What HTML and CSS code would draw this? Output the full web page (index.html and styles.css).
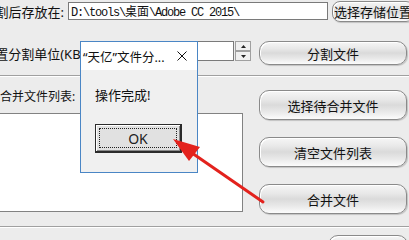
FILE: index.html
```html
<!DOCTYPE html>
<html lang="zh-CN">
<head>
  <meta charset="UTF-8">
  <link rel="stylesheet" href="styles.css">
</head>
<body>
  <div class="app">
    <div class="row row-path">
      <div class="label label-path"><span>分割后存放在:</span></div>
      <div class="field field-path">D:\tools\<span class="cjk">桌面</span>\Adobe CC 2015\</div>
      <button class="gloss btn-browse">选择存储位置</button>
    </div>

    <div class="row row-size">
      <div class="label label-size"><span>设置分割单位(KB):</span></div>
      <div class="field field-size"></div>
      <div class="spin">
        <span class="spin-btn">
          <svg width="5" height="3" viewBox="0 0 5 3"><path d="M0 3 L2.5 0 L5 3 Z" fill="#222"/></svg>
        </span>
        <span class="spin-btn">
          <svg width="5" height="3" viewBox="0 0 5 3"><path d="M0 0 L2.5 3 L5 0 Z" fill="#222"/></svg>
        </span>
      </div>
      <button class="gloss btn-side">分割文件</button>
    </div>

    <div class="sep"></div>

    <div class="merge">
      <div class="merge-left">
        <div class="label-list">合并文件列表:</div>
        <div class="listbox"></div>
      </div>
      <div class="merge-right">
        <button class="gloss btn-side">选择待合并文件</button>
        <button class="gloss btn-side">清空文件列表</button>
        <button class="gloss btn-side">合并文件</button>
      </div>
    </div>

    <div class="sep sep-bottom"></div>

    <div class="row row-bottom">
      <button class="gloss btn-bottom"></button>
    </div>
  </div>

  <!-- 提示框 -->
  <div class="msgbox">
    <div class="msgbox-title">
      <span>“天亿”文件分...</span>
      <svg class="msgbox-close" width="10" height="10" viewBox="0 0 10 10">
        <path d="M0.5 0.5 L9.5 9.5 M9.5 0.5 L0.5 9.5" stroke="#111" stroke-width="1"/>
      </svg>
    </div>
    <div class="msgbox-body">
      <p>操作完成!</p>
      <button class="ok"><span>OK</span></button>
    </div>
  </div>

  <svg class="arrow" width="409" height="240" viewBox="0 0 409 240">
    <line x1="263" y1="202" x2="192" y2="153" stroke="#e3221d" stroke-width="3" stroke-linecap="round"/>
    <polygon points="173,139 189,161 200,147" fill="#e3221d"/>
  </svg>
</body>
</html>
```

FILE: styles.css
```css
* {
  box-sizing: border-box;
}

body {
  margin: 0;
  padding: 0;
  width: 409px;
  height: 240px;
  overflow: hidden;
  position: relative;
  background-color: #ececec;
  font-family: "Noto Sans", "Noto Sans CJK SC", sans-serif;
  font-size: 13px;
  color: #111;
}

.app {
  display: flex;
  flex-direction: column;
}

.row {
  display: flex;
  align-items: center;
  flex: none;
}

.label {
  display: flex;
  justify-content: flex-end;
  overflow: hidden;
  white-space: nowrap;
  flex: none;
}

.field {
  background: #fff;
  border: 1px solid #7a7a7a;
  flex: none;
}

/* первая строка */
.row-path {
  height: 22px;
}

.label-path {
  width: 67px;
  padding-right: 3px;
}

.field-path {
  width: 260px;
  height: 18px;
  margin-left: 1px;
  padding-left: 2px;
  font-family: "Liberation Mono", monospace;
  font-size: 12px;
  letter-spacing: -1.2px;
  line-height: 16px;
  white-space: nowrap;
  overflow: hidden;
}

.field-path .cjk {
  font-family: "Noto Sans CJK SC", sans-serif;
  letter-spacing: 0;
}

.gloss {
  flex: none;
  padding: 0;
  font-family: "Noto Sans", "Noto Sans CJK SC", sans-serif;
  font-size: 13px;
  color: #111;
  border: 1px solid #8a8a8a;
  border-radius: 10px;
  background: linear-gradient(to bottom, #f6f6f6 0%, #e8e8e8 30%, #dadada 50%, #e9e9e9 75%, #fcfcfc 100%);
  box-shadow: inset 1px 1px 0 #fff, 1px 1px 1px rgba(0, 0, 0, 0.18);
}

.btn-browse {
  width: 82px;
  height: 21px;
  margin-left: 4px;
  border-radius: 8px;
  text-align: left;
  padding-left: 1px;
}

/* вторая строка */
.row-size {
  height: 24px;
  margin-top: 19px;
}

.label-size {
  width: 88px;
}

.field-size {
  width: 146px;
  height: 20px;
  align-self: flex-start;
}

.spin {
  display: flex;
  flex-direction: column;
  width: 16px;
  margin-left: 1px;
  align-self: flex-start;
}

.spin-btn {
  height: 10px;
  display: flex;
  align-items: center;
  justify-content: center;
  background: #f0f0f0;
  border: 1px solid #a0a0a0;
}

.btn-side {
  width: 148px;
  height: 24px;
  margin-left: 8px;
}

.sep {
  height: 2px;
  margin-top: 10px;
  border-top: 1px solid #a0a0a0;
  border-bottom: 1px solid #fff;
  flex: none;
}

/* список */
.merge {
  display: flex;
  margin-top: 13px;
}

.merge-left {
  width: 245px;
  margin-left: -2px;
  display: flex;
  flex-direction: column;
}

.label-list {
  height: 23px;
  line-height: 14px;
  padding-left: 2px;
  font-size: 12px;
  white-space: nowrap;
}

.listbox {
  height: 99px;
  background: #fff;
  border: 1px solid #828282;
}

.merge-right {
  display: flex;
  flex-direction: column;
  gap: 17px;
  margin-left: 16px;
}

.merge-right .btn-side {
  height: 30px;
  margin-left: 0;
}

.sep-bottom {
  margin-top: 12px;
}

.row-bottom {
  margin-top: 7px;
}

.btn-bottom {
  width: 80px;
  height: 24px;
  margin-left: 328px;
}

/* окно сообщения */
.msgbox {
  position: absolute;
  left: 80px;
  top: 41px;
  width: 118px;
  height: 132px;
  background: #f0f0f0;
  border: 1px solid #4a86c5;
  display: flex;
  flex-direction: column;
}

.msgbox-title {
  height: 28px;
  flex: none;
  background: #fff;
  display: flex;
  align-items: center;
  justify-content: space-between;
  padding: 0 10px 0 2px;
  font-size: 12.5px;
  white-space: nowrap;
}

.msgbox-body {
  padding: 17px 14px 0;
}

.msgbox-body p {
  margin: 0;
  font-size: 13px;
  line-height: 16px;
}

.ok {
  width: 87px;
  height: 29px;
  margin-top: 21px;
  padding: 3px;
  background: #e1e1e1;
  border: 1px solid #2b2b2b;
  border-right-width: 2px;
  border-bottom-width: 2px;
  box-shadow: inset 1px 1px 0 #fff, inset -1px -1px 0 #8a8a8a;
  font-family: "Noto Sans", sans-serif;
  font-size: 14px;
  color: #222;
  display: flex;
}

.ok span {
  flex: 1;
  display: flex;
  align-items: center;
  justify-content: center;
  border: 1px dotted #222;
}

.arrow {
  position: absolute;
  left: 0;
  top: 0;
  pointer-events: none;
}
```
